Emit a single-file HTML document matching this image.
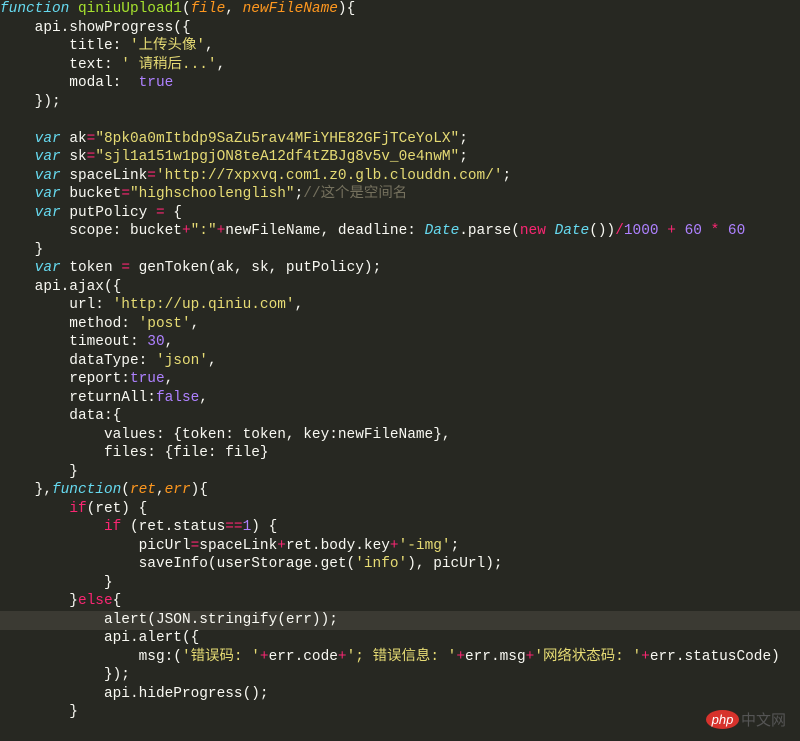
<!DOCTYPE html>
<html><head><meta charset="utf-8"><style>
html,body{margin:0;padding:0;background:#272822;width:800px;height:741px;overflow:hidden}
pre{margin:0;position:absolute;left:0;top:0px;font-family:"Liberation Mono","Noto Sans CJK SC",monospace;font-size:14.45px;line-height:18.5px;color:#f8f8f2;white-space:pre}
.k{color:#66d9ef;font-style:italic}.f{color:#a6e22e}.p{color:#fd971f;font-style:italic}
.s{color:#e6db74}.n{color:#ae81ff}.o{color:#f92672}.c{color:#75715e}.kw{color:#f92672}
.hl{position:absolute;left:0;top:611px;width:800px;height:19px;background:#3b3a33}
.logo{position:absolute;left:706px;top:710px;width:33px;height:19px;border-radius:50%;background:#d7322c;color:#fff;font:italic 13px "Liberation Sans",sans-serif;text-align:center;line-height:19px}
.logo2{position:absolute;left:741px;top:710px;color:#555;font:15px "Noto Sans CJK SC",sans-serif;line-height:19px}
</style></head><body>
<div class="hl"></div>
<pre><span class="k">function</span> <span class="f">qiniuUpload1</span>(<span class="p">file</span>, <span class="p">newFileName</span>){
    api.showProgress({
        title: <span class="s">'上传头像'</span>,
        text: <span class="s">' 请稍后...'</span>,
        modal:  <span class="n">true</span>
    });

    <span class="k">var</span> ak<span class="o">=</span><span class="s">"8pk0a0mItbdp9SaZu5rav4MFiYHE82GFjTCeYoLX"</span>;
    <span class="k">var</span> sk<span class="o">=</span><span class="s">"sjl1a151w1pgjON8teA12df4tZBJg8v5v_0e4nwM"</span>;
    <span class="k">var</span> spaceLink<span class="o">=</span><span class="s">'http://7xpxvq.com1.z0.glb.clouddn.com/'</span>;
    <span class="k">var</span> bucket<span class="o">=</span><span class="s">"highschoolenglish"</span>;<span class="c">//这个是空间名</span>
    <span class="k">var</span> putPolicy <span class="o">=</span> {
        scope: bucket<span class="o">+</span><span class="s">":"</span><span class="o">+</span>newFileName, deadline: <span class="k">Date</span>.parse(<span class="kw">new</span> <span class="k">Date</span>())<span class="o">/</span><span class="n">1000</span> <span class="o">+</span> <span class="n">60</span> <span class="o">*</span> <span class="n">60</span>
    }
    <span class="k">var</span> token <span class="o">=</span> genToken(ak, sk, putPolicy);
    api.ajax({
        url: <span class="s">'http://up.qiniu.com'</span>,
        method: <span class="s">'post'</span>,
        timeout: <span class="n">30</span>,
        dataType: <span class="s">'json'</span>,
        report:<span class="n">true</span>,
        returnAll:<span class="n">false</span>,
        data:{
            values: {token: token, key:newFileName},
            files: {file: file}
        }
    },<span class="k">function</span>(<span class="p">ret</span>,<span class="p">err</span>){
        <span class="kw">if</span>(ret) {
            <span class="kw">if</span> (ret.status<span class="o">==</span><span class="n">1</span>) {
                picUrl<span class="o">=</span>spaceLink<span class="o">+</span>ret.body.key<span class="o">+</span><span class="s">'-img'</span>;
                saveInfo(userStorage.get(<span class="s">'info'</span>), picUrl);
            }
        }<span class="kw">else</span>{
            alert(JSON.stringify(err));
            api.alert({
                msg:(<span class="s">'错误码: '</span><span class="o">+</span>err.code<span class="o">+</span><span class="s">'; 错误信息: '</span><span class="o">+</span>err.msg<span class="o">+</span><span class="s">'网络状态码: '</span><span class="o">+</span>err.statusCode)
            });
            api.hideProgress();
        }</pre>
<div class="logo">php</div><div class="logo2">中文网</div>
</body></html>
